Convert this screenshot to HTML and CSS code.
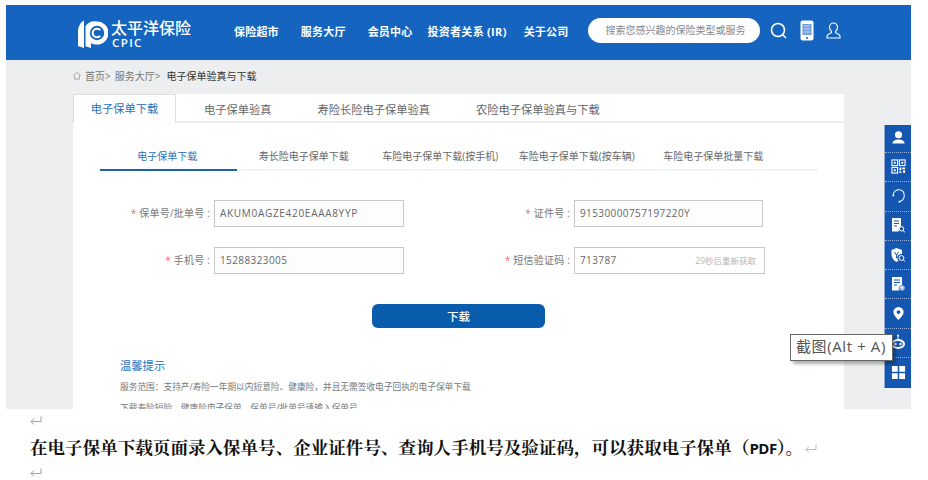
FILE: index.html
```html
<!DOCTYPE html>
<html lang="zh-CN">
<head>
<meta charset="utf-8">
<title>电子保单下载</title>
<link rel="stylesheet" href="styles.css">
</head>
<body>
<div class="shot">
  <header class="topbar">
    <div class="logo">
      <svg class="logo-mark" viewBox="0 0 30 28" width="30" height="28">
        <path fill="#fff" d="M6 0.500C2.500 2.500 0 6.500 0 11.500V26l6 2z"/>
        <path fill="#fff" fill-rule="evenodd" d="M19 1.500a11.500 11.500 0 0 1 0 23c-2 0-4.200-.6-6-1.600V28l-5.500-1.800V6A11.500 11.500 0 0 1 19 1.500zm0 4.300a7.200 7.200 0 1 0 0 14.400 7.200 7.200 0 0 0 0-14.400z"/>
        <path fill="none" stroke="#fff" stroke-width="2" d="M22.200 10.200a4.300 4.300 0 1 0 0 5.600"/>
      </svg>
      <div class="logo-text">
        <span class="logo-cn">太平洋保险</span>
        <span class="logo-en">CPIC</span>
      </div>
    </div>
    <nav class="nav">
      <a>保险超市</a><a>服务大厅</a><a>会员中心</a><a>投资者关系 (IR)</a><a>关于公司</a>
    </nav>
    <div class="search">搜索您感兴趣的保险类型或服务</div>
    <div class="top-icons">
      <svg viewBox="0 0 18 18" width="18" height="18"><circle cx="8" cy="8" r="6.500" fill="none" stroke="#fff" stroke-width="1.600"/><path d="M13 13l3 3" stroke="#fff" stroke-width="1.600"/></svg>
      <svg viewBox="0 0 14 21" width="14" height="21"><rect x="0.500" y="0.500" width="13" height="20" rx="2" fill="#fff"/><rect x="2.500" y="4" width="9" height="11" fill="#6f9ed8"/><path d="M4 6h6M4 9h6M4 12h6" stroke="#cfe0f5" stroke-width="1.200"/><circle cx="7" cy="18" r="1" fill="#1565c0"/></svg>
      <svg viewBox="0 0 15 17" width="15" height="17"><path fill="none" stroke="#fff" stroke-width="1.100" d="M7.500 1C5 1 3.500 3 3.500 5.300c0 2 .8 3.400 2 4.200v1.300C3.500 11.600 1 12.600 1 14.500V16h13v-1.500c0-1.900-2.500-2.900-4.500-3.700V9.500c1.200-.8 2-2.200 2-4.200C11.500 3 10 1 7.500 1z"/></svg>
    </div>
  </header>

  <main class="page">
    <div class="crumbs">
      <svg viewBox="0 0 10 10" width="8" height="9"><path fill="none" stroke="#888" stroke-width="0.800" d="M.5 5L5 1l4.500 4M2 4.500V9.500h6V4.500"/></svg>
      <span>首页&gt;</span><span>服务大厅&gt;</span><span class="crumb-now">电子保单验真与下载</span>
    </div>
    <section class="card">
      <div class="tabs">
        <a class="tab tab-on">电子保单下载</a><a class="tab">电子保单验真</a><a class="tab">寿险长险电子保单验真</a><a class="tab">农险电子保单验真与下载</a>
      </div>
      <div class="subtabs">
        <a class="subtab subtab-on">电子保单下载</a><a class="subtab">寿长险电子保单下载</a><a class="subtab">车险电子保单下载(按手机)</a><a class="subtab">车险电子保单下载(按车辆)</a><a class="subtab">车险电子保单批量下载</a>
      </div>
      <form class="form">
        <label class="lbl"><i>*</i> 保单号/批单号 :</label><div class="field field-caps">AKUM0AGZE420EAAA8YYP</div>
        <label class="lbl"><i>*</i> 证件号 :</label><div class="field">91530000757197220Y</div>
        <label class="lbl"><i>*</i> 手机号 :</label><div class="field">15288323005</div>
        <label class="lbl"><i>*</i> 短信验证码 :</label><div class="field field-code"><span>713787</span><small>29秒后重新获取</small></div>
      </form>
      <div class="btn-row"><button class="btn" type="button">下载</button></div>
      <div class="tips">
        <h3>温馨提示</h3>
        <p>服务范围：支持产/寿险一年期以内短意险、健康险，并且无需签收电子回执的电子保单下载</p>
        <p>下载寿险短险、健康险电子保单，保单号/批单号请输入保单号</p>
      </div>
    </section>
  </main>

  <aside class="rail">
    <div class="rail-item"><svg viewBox="0 0 16 16" width="15" height="15"><circle cx="8" cy="5" r="3.800" fill="#fff"/><path fill="#fff" d="M1.500 14.500c0-3 3-4.500 6.500-4.500s6.500 1.500 6.500 4.500z"/></svg></div>
    <div class="rail-item"><svg viewBox="0 0 16 16" width="15" height="15"><g fill="none" stroke="#fff" stroke-width="1.200"><rect x="1" y="1" width="6" height="6"/><rect x="9" y="1" width="6" height="6"/><rect x="1" y="9" width="6" height="6"/></g><path fill="#fff" d="M3 3h2v2H3zM11 3h2v2h-2zM3 11h2v2H3zM9 9h2v3H9zM12 9h3v2h-3zM13 12h2v3h-2zM9 13h2v2H9z"/></svg></div>
    <div class="rail-item"><svg viewBox="0 0 16 16" width="15" height="15"><path fill="none" stroke="#fff" stroke-width="1.100" d="M2.500 7.500a5.800 5.800 0 0 1 11.500-1c.5 3-1 6.500-4.500 8"/><circle cx="2.500" cy="8" r="1" fill="#fff"/><circle cx="9" cy="14.600" r="1" fill="#fff"/></svg></div>
    <div class="rail-item"><svg viewBox="0 0 16 16" width="16" height="16"><path fill="#fff" d="M2 1h9v8.500a4 4 0 0 0-2 5H2z"/><path d="M4 4h5M4 6.500h5M4 9h3" stroke="#1456b0"/><circle cx="11.500" cy="11.800" r="2.200" fill="none" stroke="#fff"/><path d="M13 13.500l2 1.800" stroke="#fff"/></svg></div>
    <div class="rail-item"><svg viewBox="0 0 16 16" width="16" height="16"><path fill="#fff" d="M6.500 1L12 3v4a4 4 0 0 0-3.500 6.800L6.500 15C3 13 1.500 10.500 1.500 7V3z"/><path d="M4.500 5l2 3 2-3M6.500 8v3" stroke="#1456b0" fill="none"/><circle cx="11.500" cy="11" r="2.400" fill="none" stroke="#fff"/><path d="M13.200 12.800l1.800 1.800" stroke="#fff"/></svg></div>
    <div class="rail-item"><svg viewBox="0 0 16 16" width="16" height="16"><path fill="#fff" d="M2 1h10v8a4 4 0 0 0-3 5.500H2z"/><path d="M4 4h6M4 6.500h6M4 9h3" stroke="#1456b0"/><circle cx="12" cy="12" r="2.800" fill="#9fbfe6"/><circle cx="12" cy="11.500" r="1" fill="#fff"/></svg></div>
    <div class="rail-item"><svg viewBox="0 0 16 16" width="15" height="15"><path fill="#fff" fill-rule="evenodd" d="M8 1a5.500 5.500 0 0 1 5.500 5.500C13.500 10 8 15 8 15S2.500 10 2.500 6.500A5.500 5.500 0 0 1 8 1zm0 3.500a2 2 0 1 0 0 4 2 2 0 0 0 0-4z"/></svg></div>
    <div class="rail-item"><svg viewBox="0 0 16 16" width="16" height="16"><path d="M8 1.500V5" stroke="#fff"/><circle cx="8" cy="1.500" r="1" fill="#fff"/><ellipse cx="8" cy="10" rx="7" ry="5" fill="#fff"/><ellipse cx="8" cy="10" rx="5" ry="3" fill="#1456b0"/><circle cx="5.500" cy="10" r="1.200" fill="#fff"/><circle cx="10.500" cy="10" r="1.200" fill="#fff"/></svg></div>
    <div class="rail-item"><svg viewBox="0 0 16 16" width="15" height="15"><path fill="#fff" d="M1 1h6.200v6.200H1zM8.800 1H15v6.200H8.800zM1 8.800h6.200V15H1zM8.800 8.800H15V15H8.800z"/></svg></div>
  </aside>
  <div class="tooltip">截图(Alt + A)</div>
</div>

<div class="doc">
  <svg class="pilcrow" viewBox="0 0 12 10" width="12" height="10"><path fill="none" stroke="#888" stroke-width="0.800" d="M11 0.500V5.500H1M4 2.500L1 5.500 4 8.500"/></svg>
  <p class="doc-line">在电子保单下载页面录入保单号、企业证件号、查询人手机号及验证码，可以获取电子保单（<span class="doc-latin">PDF</span>）。<svg class="pilcrow-inline" viewBox="0 0 12 10" width="12" height="10"><path fill="none" stroke="#aaa" stroke-width="0.800" d="M11 0.500V5.500H1M4 2.500L1 5.500 4 8.500"/></svg></p>
  <svg class="pilcrow" viewBox="0 0 12 10" width="12" height="10"><path fill="none" stroke="#888" stroke-width="0.800" d="M11 0.500V5.500H1M4 2.500L1 5.500 4 8.500"/></svg>
</div>
</body>
</html>
```
FILE: styles.css
```css
* { box-sizing: border-box; }
html, body { margin: 0; padding: 0; }
body {
  width: 928px;
  height: 480px;
  overflow: hidden;
  background: #fff;
  font-family: "Open Sans", "Noto Sans CJK SC", sans-serif;
  padding-top: 5px;
}
.shot {
  position: relative;
  margin-left: 6px;
  width: 905px;
  height: 404px;
  overflow: hidden;
  background: #eceef0;
}
.topbar {
  height: 55px;
  padding-bottom: 4px;
  background: #1565c0;
  display: flex;
  align-items: center;
  color: #fff;
}
.logo { display: flex; align-items: center; margin: 7px 0 0 72px; width: 156px; }
.logo-mark { flex: none; }
.logo-text { display: flex; flex-direction: column; margin-left: 3px; }
.logo-cn { font-size: 16px; line-height: 16px; height: 16px; font-weight: 500; }
.logo-en { font-size: 11.500px; line-height: 11px; height: 11px; margin-top: 1px; margin-left: 1px; font-weight: 600; letter-spacing: 1.400px; }
.nav { display: flex; font-size: 11px; font-weight: 700; }
.nav a { margin-right: 22px; white-space: nowrap; letter-spacing: 0.200px; }
.nav a:nth-child(3) { margin-right: 15px; }
.nav a:nth-child(4) { margin-right: 17px; letter-spacing: 0.300px; }
.nav a:nth-child(5) { margin-right: 0; }
.search {
  margin-left: 20px;
  width: 172px;
  height: 25px;
  border-radius: 13px;
  background: #fff;
  color: #888;
  font-size: 10px;
  line-height: 25px;
  padding-left: 17px;
  white-space: nowrap;
  overflow: hidden;
}
.top-icons { display: flex; align-items: center; gap: 12px; margin-left: 10px; }
.crumbs {
  display: flex;
  align-items: center;
  gap: 4px;
  height: 34px;
  padding: 0 0 4px 67px;
  font-size: 10px;
  color: #777;
}
.crumb-now { color: #333; margin-left: 2px; }
.card {
  margin-left: 67px;
  width: 771px;
  height: 315px;
  background: #fff;
}
.tabs {
  display: flex;
  height: 29px;
  border-bottom: 2px solid #eee;
  font-size: 11.250px;
  color: #666;
}
.tab { padding: 4px 23px 0; line-height: 24px; white-space: nowrap; }
.tab-on {
  width: 103px;
  height: 29px;
  padding: 2px 0 0;
  text-align: center;
  color: #2a70b8;
  background: #fff;
  border: 1px solid #ddd;
  border-bottom: 0;
  margin-right: 5px;
}
.subtabs {
  display: grid;
  grid-template-columns: repeat(5, 136.500px);
  width: 718px;
  margin: 24px 0 0 27px;
  height: 24px;
  border-bottom: 2px solid #f2f2f2;
  font-size: 10px;
  color: #666;
}
.subtab { text-align: center; line-height: 19px; white-space: nowrap; height: 24px; padding-right: 2px; }
.subtab-on { color: #2a70b8; border-bottom: 2px solid #1a62b4; }
.form {
  display: grid;
  grid-template-columns: 141px 190px 170px 189px;
  grid-auto-rows: 27px;
  row-gap: 20px;
  margin: 29px 0 0 0;
  font-size: 10px;
  color: #777;
}
.lbl { text-align: right; line-height: 27px; padding-right: 4px; white-space: nowrap; letter-spacing: 0.200px; }
.lbl i { color: #e8707a; font-style: normal; }
.field {
  border: 1px solid #c8c8c8;
  background: #fdfdfd;
  line-height: 25px;
  padding-left: 5px;
  letter-spacing: 0.400px;
  color: #666;
}
.field-caps { letter-spacing: 0.700px; }
.field-code { display: flex; justify-content: space-between; width: 191px; padding-right: 8px; background: #fff; }
.field-code small { font-size: 8.500px; color: #b5b5b5; letter-spacing: 0; }
.btn-row { margin: 30px 0 0 299px; }
.btn {
  display: block;
  width: 173px;
  height: 24px;
  padding: 0;
  border: 0;
  border-radius: 6px;
  background: #0a5cac;
  color: #fff;
  font: 500 11.500px "Open Sans", "Noto Sans CJK SC", sans-serif;
}
.tips { margin: 30px 0 0 47px; }
.tips h3 { margin: 0; font-size: 11.300px; line-height: 16px; font-weight: 400; color: #2a70b8; }
.tips p { margin: 0; font-size: 8.700px; line-height: 21px; color: #777; white-space: nowrap; }
.tips h3 + p { margin-top: 3px; }
.rail {
  position: absolute;
  left: 878px;
  top: 120px;
  width: 27px;
  height: 263px;
  background: #1456b0;
  border-left: 1px solid #8fa8cf;
}
.rail-item {
  height: 29.300px;
  padding-bottom: 1px;
  display: flex;
  align-items: center;
  justify-content: center;
  border-bottom: 1px dotted #8fb0de;
}
.rail-item:first-child { height: 28px; padding-bottom: 3px; }
.rail-item:last-child { border-bottom: 0; }
.tooltip {
  position: absolute;
  left: 784px;
  top: 329px;
  width: 103px;
  height: 27px;
  background: #fff;
  border: 1px solid #666;
  box-shadow: 3px 3px 3px rgba(0,0,0,.3);
  color: #555;
  font: 15px/23px "Open Sans", "Noto Sans CJK SC", sans-serif;
  letter-spacing: 0.600px;
  padding-left: 5px;
  white-space: nowrap;
}
.doc { padding-left: 30px; }
.pilcrow { display: block; }
.doc-line {
  margin: 0;
  font: 700 17.560px/24px "Liberation Serif", "Noto Serif CJK SC", "Noto Sans CJK SC", serif;
  color: #111;
  white-space: nowrap;
}
.doc-latin { font: 700 15px "Open Sans", sans-serif; letter-spacing: -0.500px; }
.pilcrow-inline { margin-left: 2px; }
.doc .pilcrow:first-child { margin-top: 7px; margin-bottom: 10px; }
.doc .pilcrow:last-child { margin-top: 8px; }
```
